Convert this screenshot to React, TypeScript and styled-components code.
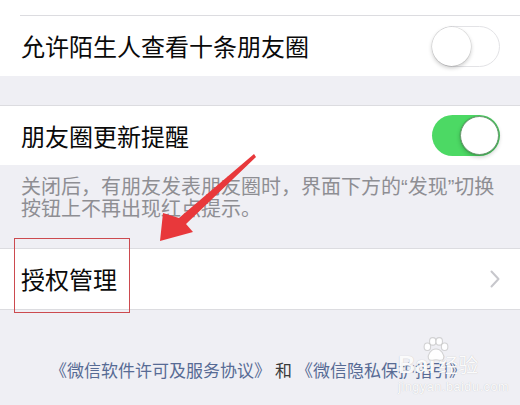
import React from "react";
import styled, { createGlobalStyle } from "styled-components";

const Global = createGlobalStyle`
  html, body { margin: 0; padding: 0; }
  body {
    background: #efeff4;
    font-family: "Noto Sans CJK SC", "Noto Sans", sans-serif;
    -webkit-font-smoothing: antialiased;
  }
`;

const Page = styled.div`
  position: relative;
  width: 520px;
  height: 405px;
  overflow: hidden;
  background: #efeff4;
  display: flex;
  flex-direction: column;
`;

const Group = styled.div<{ $top?: boolean; $bottom?: boolean; $mt?: number }>`
  background: #ffffff;
  margin-top: ${(p) => p.$mt ?? 0}px;
  border-top: ${(p) => (p.$top ? "1px solid #dcdce0" : "none")};
  border-bottom: ${(p) => (p.$bottom ? "1px solid #dcdce0" : "none")};
  display: flex;
  flex-direction: column;
`;

const Stub = styled.div`
  height: 15px;
`;

const Separator = styled.div`
  height: 1px;
  margin-left: 20px;
  background: #dcdce0;
`;

const Row = styled.div<{ $h: number }>`
  height: ${(p) => p.$h}px;
  display: flex;
  align-items: center;
  justify-content: space-between;
  padding: 0 20px 0 21px;
`;

const Label = styled.span`
  font-size: 24px;
  color: #0a0a0a;
  line-height: 1;
`;

const Switch = styled.div<{ $on: boolean }>`
  position: relative;
  width: 68px;
  height: 41px;
  box-sizing: border-box;
  border-radius: 21px;
  background: ${(p) => (p.$on ? "#4cd964" : "#ffffff")};
  border: ${(p) => (p.$on ? "none" : "1.5px solid #e3e3e6")};
  flex-shrink: 0;
`;

const Knob = styled.div<{ $on: boolean }>`
  position: absolute;
  top: ${(p) => (p.$on ? 1 : 0)}px;
  ${(p) => (p.$on ? "right: 1px;" : "left: -1px;")}
  width: 39px;
  height: 39px;
  border-radius: 50%;
  background: #ffffff;
  box-shadow: 0 2px 4px rgba(0, 0, 0, 0.22), 0 0 0 0.5px rgba(0, 0, 0, 0.12);
  box-sizing: border-box;
  border: ${(p) => (p.$on ? "1.5px solid #6a9a70" : "none")};
`;

const Note = styled.div`
  padding: 11px 18px 28px 21px;
  font-family: "Liberation Sans", "Noto Sans CJK SC", sans-serif;
  font-size: 20px;
  line-height: 22px;
  color: #8e8e93;
`;

const Chevron = styled.svg`
  width: 10px;
  height: 18px;
`;

const Footer = styled.div`
  padding-top: 50px;
  text-align: center;
  font-size: 17px;
  line-height: 20px;
  color: #576b95;
  white-space: nowrap;
  padding-right: 4px;
`;

const And = styled.span`
  color: #3a3a3a;
  margin: 0 4px;
`;

const Box = styled.div`
  position: absolute;
  left: 14px;
  top: 238px;
  width: 116px;
  height: 75px;
  box-sizing: border-box;
  border: 1px solid #cc4a4f;
`;

const Arrow = styled.svg`
  position: absolute;
  left: 0;
  top: 0;
  width: 520px;
  height: 405px;
  pointer-events: none;
`;

const Watermark = styled.div`
  position: absolute;
  left: 398px;
  top: 338px;
  width: 110px;
  display: flex;
  flex-direction: column;
  align-items: flex-start;
  color: rgba(255, 255, 255, 0.95);
  text-shadow: 0 0 1px rgba(0, 0, 0, 0.22);
  font-family: "Liberation Sans", "Noto Sans CJK SC", sans-serif;
`;

const Brand = styled.div`
  position: relative;
  display: flex;
  align-items: baseline;
  font-size: 24px;
  font-weight: bold;
  line-height: 26px;
  margin-top: 14px;
`;

const BrandCjk = styled.span`
  font-family: "Noto Sans CJK SC", sans-serif;
  font-weight: normal;
  font-size: 20px;
  margin-left: 3px;
`;

const Paw = styled.svg`
  position: absolute;
  left: 24px;
  top: -15px;
  width: 28px;
  height: 26px;
`;

const Site = styled.div`
  font-size: 12.5px;
  line-height: 14px;
  margin-top: 2px;
  letter-spacing: 0.6px;
`;

export default function App() {
  return (
    <>
      <Global />
      <Page>
        <Group>
          <Stub />
          <Separator />
          <Row $h={60}>
            <Label>允许陌生人查看十条朋友圈</Label>
            <Switch $on={false}>
              <Knob $on={false} />
            </Switch>
          </Row>
        </Group>
        <Group $top $mt={29}>
          <Row $h={59}>
            <Label>朋友圈更新提醒</Label>
            <Switch $on>
              <Knob $on />
            </Switch>
          </Row>
        </Group>
        <Note>关闭后，有朋友发表朋友圈时，界面下方的“发现”切换按钮上不再出现红点提示。</Note>
        <Group $top $bottom>
          <Row $h={60}>
            <Label>授权管理</Label>
            <Chevron viewBox="0 0 10 18">
              <path d="M1.5 1.5 L8.5 9 L1.5 16.5" fill="none" stroke="#c7c7cc" strokeWidth="2" strokeLinecap="round" strokeLinejoin="round" />
            </Chevron>
          </Row>
        </Group>
        <Footer>
          《微信软件许可及服务协议》<And>和</And>《微信隐私保护指引》
        </Footer>

        <Box />
        <Arrow viewBox="0 0 520 405">
          <path d="M254 154 L256 157 L186 224 L193 232 L160 241 L163 213 L179 218 Z" fill="#e8383b" />
        </Arrow>

        <Watermark>
          <Brand>
            <Paw viewBox="0 0 26 24">
              <g fill="rgba(255,255,255,0.92)" stroke="rgba(180,180,180,0.55)" strokeWidth="1">
                <ellipse cx="5" cy="9" rx="3" ry="3.5" />
                <ellipse cx="10" cy="4" rx="3" ry="3.5" />
                <ellipse cx="16" cy="4" rx="3" ry="3.5" />
                <ellipse cx="21" cy="9" rx="3" ry="3.5" />
                <path d="M13 11 C8 11 5 17 6 20 C7 23 11 21 13 21 C15 21 19 23 20 20 C21 17 18 11 13 11 Z" />
              </g>
            </Paw>
            Bai
            <BrandCjk>经验</BrandCjk>
          </Brand>
          <Site>jingyan.baidu.com</Site>
        </Watermark>
      </Page>
    </>
  );
}
